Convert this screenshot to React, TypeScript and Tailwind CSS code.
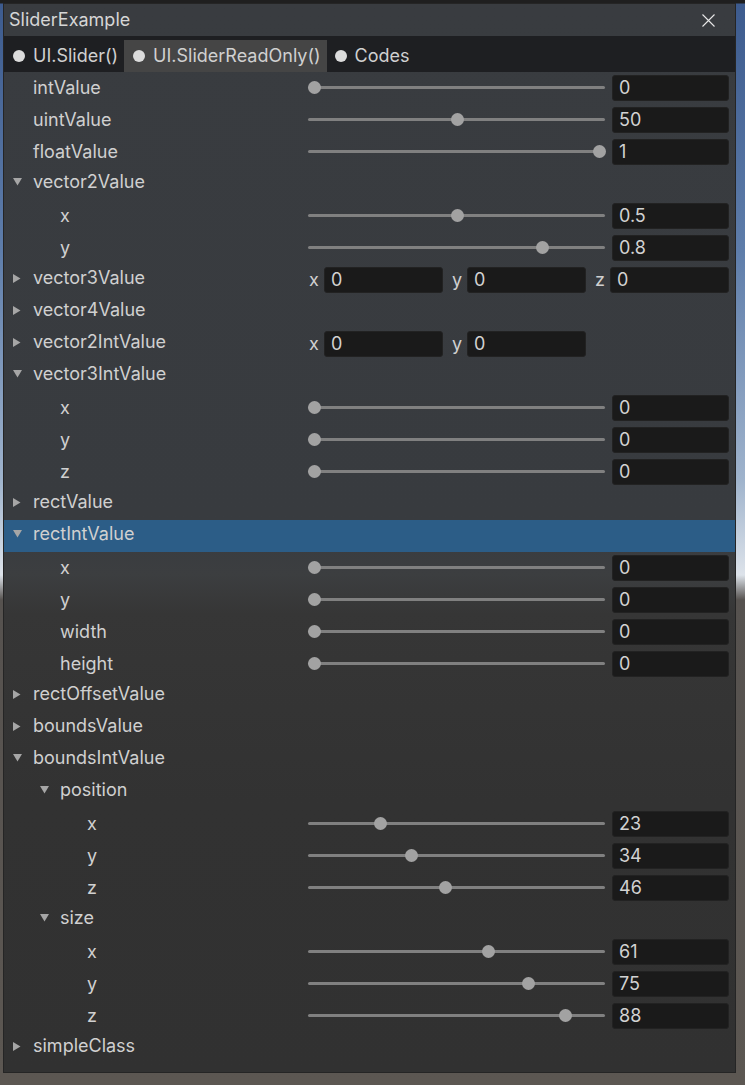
import React from 'react';

type Row =
  | { k: 's'; label: string; lvl: number; t: number; v: string }
  | { k: 'f'; label: string; lvl: number; open?: boolean; selected?: boolean; fields?: [string, string][] };

const rows: Row[] = [
  { k: 's', label: 'intValue', lvl: 0, t: 0, v: '0' },
  { k: 's', label: 'uintValue', lvl: 0, t: 0.5, v: '50' },
  { k: 's', label: 'floatValue', lvl: 0, t: 1, v: '1' },
  { k: 'f', label: 'vector2Value', lvl: 0, open: true },
  { k: 's', label: 'x', lvl: 1, t: 0.5, v: '0.5' },
  { k: 's', label: 'y', lvl: 1, t: 0.8, v: '0.8' },
  { k: 'f', label: 'vector3Value', lvl: 0, fields: [['x', '0'], ['y', '0'], ['z', '0']] },
  { k: 'f', label: 'vector4Value', lvl: 0 },
  { k: 'f', label: 'vector2IntValue', lvl: 0, fields: [['x', '0'], ['y', '0']] },
  { k: 'f', label: 'vector3IntValue', lvl: 0, open: true },
  { k: 's', label: 'x', lvl: 1, t: 0, v: '0' },
  { k: 's', label: 'y', lvl: 1, t: 0, v: '0' },
  { k: 's', label: 'z', lvl: 1, t: 0, v: '0' },
  { k: 'f', label: 'rectValue', lvl: 0 },
  { k: 'f', label: 'rectIntValue', lvl: 0, open: true, selected: true },
  { k: 's', label: 'x', lvl: 1, t: 0, v: '0' },
  { k: 's', label: 'y', lvl: 1, t: 0, v: '0' },
  { k: 's', label: 'width', lvl: 1, t: 0, v: '0' },
  { k: 's', label: 'height', lvl: 1, t: 0, v: '0' },
  { k: 'f', label: 'rectOffsetValue', lvl: 0 },
  { k: 'f', label: 'boundsValue', lvl: 0 },
  { k: 'f', label: 'boundsIntValue', lvl: 0, open: true },
  { k: 'f', label: 'position', lvl: 1, open: true },
  { k: 's', label: 'x', lvl: 2, t: 0.23, v: '23' },
  { k: 's', label: 'y', lvl: 2, t: 0.34, v: '34' },
  { k: 's', label: 'z', lvl: 2, t: 0.46, v: '46' },
  { k: 'f', label: 'size', lvl: 1, open: true },
  { k: 's', label: 'x', lvl: 2, t: 0.61, v: '61' },
  { k: 's', label: 'y', lvl: 2, t: 0.75, v: '75' },
  { k: 's', label: 'z', lvl: 2, t: 0.88, v: '88' },
  { k: 'f', label: 'simpleClass', lvl: 0 },
];

const indent = ['w-[9px]', 'w-[36px]', 'w-[63px]'];

const Arrow = ({ open }: { open?: boolean }) =>
  open ? (
    <svg width="9" height="8" viewBox="0 0 9 8" className="-translate-y-[2px]">
      <polygon points="0,0 9,0 4.5,7.5" fill="#a6a6a6" />
    </svg>
  ) : (
    <svg width="8" height="9" viewBox="0 0 8 9" className="-translate-y-[2px]">
      <polygon points="0,0 7.5,4.5 0,9" fill="#a6a6a6" />
    </svg>
  );

const NumField = ({ v, w }: { v: string; w: string }) => (
  <div className={`${w} h-[26px] shrink-0 rounded-[3px] border border-[#222] bg-[#1a1a1a] pl-[6px] flex items-center text-[#d2d2d2]`}>
    {v}
  </div>
);

const Slider = ({ t }: { t: number }) => (
  <div className="relative w-[297px] h-[14px] shrink-0">
    <div className="absolute left-0 right-0 top-[5px] h-[3px] rounded-full bg-[#808080]" />
    <div
      className="absolute top-[0px] w-[13px] h-[13px] rounded-full bg-[#a2a2a2]"
      style={{ left: `${t * 285}px` }}
    />
  </div>
);

export default function App() {
  return (
    <div className="w-[745px] h-[1085px] overflow-hidden pt-[3px] pl-[3px] font-['Inter','Noto_Sans',sans-serif] text-[18px] leading-[22px] bg-[linear-gradient(to_bottom,#1f1f1f_0px,#1f1f1f_3px,#3d5b8e_4px,#5e7daa_250px,#9fb3cc_480px,#dde3ea_575px,#56524f_600px,#5c5752_1085px)]">
      <div className="w-[733px] h-[1070px] flex flex-col border border-[#252525] bg-[linear-gradient(to_bottom,#393c40_0px,#383b3f_520px,#3c3e40_570px,#363636_610px,#323232_800px,#313131_1070px)] text-[#d0d0d0]">
        {/* title */}
        <div className="h-[32px] flex items-center justify-between pl-[5px] pr-[20px] shrink-0">
          <span className="text-[#d6d6d6]">SliderExample</span>
          <svg width="13" height="13" viewBox="0 0 13 13">
            <path d="M0.5 0.5 L12.5 12.5 M12.5 0.5 L0.5 12.5" stroke="#e8e8e8" strokeWidth="1.1" />
          </svg>
        </div>
        {/* tabs */}
        <div className="h-[36px] flex items-end bg-[#1e1f22] shrink-0">
          <div className="h-[32px] flex items-center gap-[8px] pl-[9px] pr-[4px]">
            <span className="w-[12px] h-[12px] rounded-full bg-[#dcdcdc]" />
            <span>UI.Slider()</span>
          </div>
          <div className="h-[32px] flex items-center gap-[8px] pl-[9px] pr-[6px] ml-[2px] bg-[#454545]">
            <span className="w-[12px] h-[12px] rounded-full bg-[#dcdcdc]" />
            <span>UI.SliderReadOnly()</span>
          </div>
          <div className="h-[32px] flex items-center gap-[8px] pl-[8px]">
            <span className="w-[12px] h-[12px] rounded-full bg-[#dcdcdc]" />
            <span>Codes</span>
          </div>
        </div>
        {/* rows */}
        <div className="flex flex-col">
          {rows.map((r, i) => (
            <div
              key={i}
              className={`h-[32px] flex items-center shrink-0 ${r.k === 'f' && r.selected ? 'bg-[#2c5d87]' : ''}`}
            >
              <div className="w-[304px] h-full flex items-center shrink-0">
                <div className={`${indent[r.lvl]} shrink-0`} />
                <div className="w-[20px] shrink-0 flex items-center">
                  {r.k === 'f' && <Arrow open={r.open} />}
                </div>
                <span className={r.k === 'f' ? '-translate-y-[2px]' : ''}>{r.label}</span>
              </div>
              {r.k === 's' && (
                <>
                  <Slider t={r.t} />
                  <div className="w-[7px] shrink-0" />
                  <NumField v={r.v} w="w-[117px]" />
                </>
              )}
              {r.k === 'f' && r.fields && (
                <div className="flex items-center gap-[8px]">
                  {r.fields.map(([l, v], j) => (
                    <div key={j} className="flex items-center">
                      <span className="w-[16px] pl-[1px]">{l}</span>
                      <NumField v={v} w="w-[119px]" />
                    </div>
                  ))}
                </div>
              )}
            </div>
          ))}
        </div>
      </div>
    </div>
  );
}
